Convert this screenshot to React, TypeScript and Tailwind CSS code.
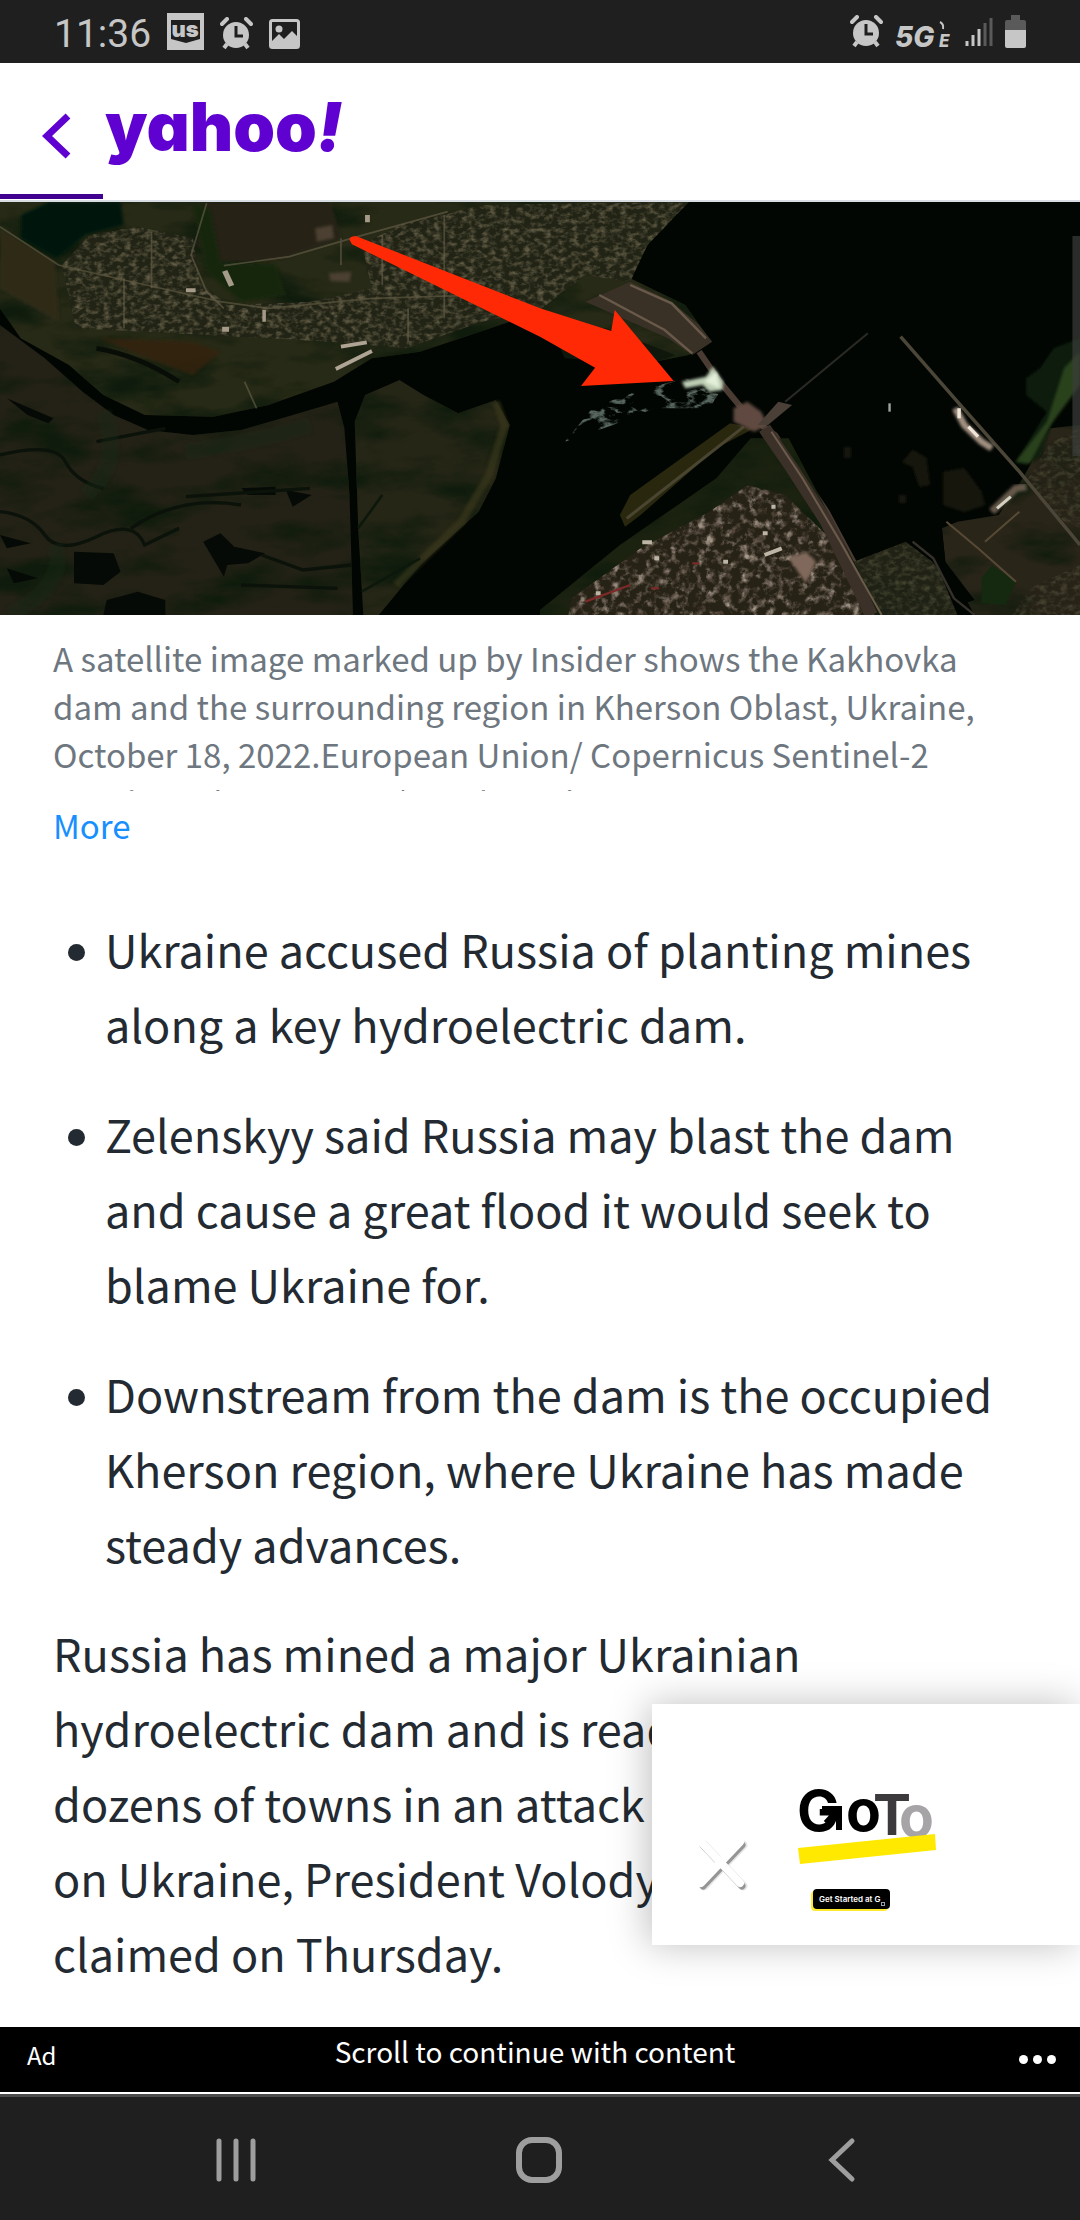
import React from 'react';

function AlarmIcon() {
  return (
    <svg width="33" height="33" viewBox="0 0 33 33" fill="none" aria-label="Alarm">
      <circle cx="16" cy="18" r="13" fill="#c6c6c6" />
      <path d="M2 7 L7 2 M31 7 L26 2" stroke="#c6c6c6" strokeWidth="4" strokeLinecap="round" />
      <path d="M7 27 L4 31 M25 27 L28 31" stroke="#c6c6c6" strokeWidth="4" />
      <path d="M16 9 V19 H23" stroke="#1f1f1f" strokeWidth="3" />
    </svg>
  );
}

function StatusBar() {
  return (
    <header className="flex h-[63px] shrink-0 items-center justify-between bg-[#1f1f1f] px-[54px]">
      <div className="flex items-center gap-4 pt-1">
        <span className="font-['Roboto'] text-[39px] leading-[48px] text-[#c6c6c6]">11:36</span>
        <svg width="37" height="37" viewBox="0 0 37 37" aria-label="US news" className="mb-1">
          <rect width="37" height="37" fill="#c6c6c6" />
          <path d="M4 7 H33 V26 L19 30 L4 26 Z" fill="#1f1f1f" />
          <text x="18" y="24" textAnchor="middle" fill="#c6c6c6" className="font-['Inter'] text-[22px] font-black">us</text>
        </svg>
        <AlarmIcon />
        <svg width="32" height="30" viewBox="0 0 32 30" fill="none" aria-label="Picture">
          <rect x="1.5" y="1.5" width="28" height="27" rx="2" stroke="#c6c6c6" strokeWidth="3" />
          <circle cx="10" cy="10" r="3.5" fill="#c6c6c6" />
          <path d="M3 22 L10 15 L15 20 L23 12 L29 18 V28 H3 Z" fill="#c6c6c6" />
        </svg>
      </div>
      <div className="flex items-center gap-3">
        <AlarmIcon />
        <svg width="58" height="38" viewBox="0 0 58 38" aria-label="5G E network">
          <text x="0" y="34" fill="#c6c6c6" className="font-['Inter'] text-[28px] font-extrabold italic">5G</text>
          <text x="44" y="34" fill="#c6c6c6" className="font-['Inter'] text-[17px] font-extrabold italic">E</text>
          <path d="M45 9 Q49 11 48 16" stroke="#c6c6c6" strokeWidth="2" fill="none" />
        </svg>
        <svg width="28" height="31" viewBox="0 0 28 31" strokeWidth="3" aria-label="Signal">
          <path d="M2 25 V30 M8 19 V30 M14 13 V30" stroke="#c6c6c6" />
          <path d="M20 7 V30 M26 2 V30" stroke="#5a5a5a" />
        </svg>
        <svg width="21" height="33" viewBox="0 0 21 33" aria-label="Battery">
          <path d="M6 0 H15 V5 H19 Q21 5 21 7 V15 H0 V7 Q0 5 2 5 H6 Z" fill="#5a5a5a" />
          <path d="M0 15 H21 V31 Q21 33 19 33 H2 Q0 33 0 31 Z" fill="#c6c6c6" />
        </svg>
      </div>
    </header>
  );
}

function SiteHeader() {
  return (
    <div className="flex shrink-0 flex-col border-b-2 border-[#d8dde4]">
      <div className="flex h-[131px] items-center pl-[42px]">
        <button aria-label="Back" className="mt-[14px]">
          <svg width="32" height="46" viewBox="0 0 32 46" fill="none">
            <path d="M26 3 L5 23 L26 43" stroke="#5f01d1" strokeWidth="7" />
          </svg>
        </button>
        <a href="#home" aria-label="yahoo!" className="ml-[31px]">
          <svg width="250" height="90" viewBox="0 0 250 90" fill="#5f01d1">
            <text x="0" y="67" className="font-['Inter'] text-[67px] font-black [font-feature-settings:'cv11']">
              yahoo<tspan className="italic">!</tspan>
            </text>
          </svg>
        </a>
      </div>
      <div className="h-[6px]">
        <div className="h-[5px] w-[103px] bg-[#400090]" />
      </div>
    </div>
  );
}

function SatelliteImage() {
  return (
    <svg
      viewBox="0 21 3136 1239"
      preserveAspectRatio="none"
      className="block h-[413px] w-full shrink-0"
      role="img"
      aria-label="Satellite image of the Kakhovka dam with a red arrow"
    >
      <defs>
        <filter id="town" x="0" y="0" width="1" height="1" colorInterpolationFilters="sRGB">
          <feTurbulence type="fractalNoise" baseFrequency="0.05 0.07" numOctaves="3" seed="4" />
          <feColorMatrix values="0 0 0 0 0.38  0 0 0 0 0.36  0 0 0 0 0.27  2.4 0 0 0 -1" />
          <feComposite in2="SourceAlpha" operator="in" result="n" />
          <feMerge><feMergeNode in="SourceGraphic" /><feMergeNode in="n" /></feMerge>
        </filter>
        <filter id="city" x="0" y="0" width="1" height="1" colorInterpolationFilters="sRGB">
          <feTurbulence type="fractalNoise" baseFrequency="0.04" numOctaves="4" seed="9" />
          <feColorMatrix values="0 0.6 0 0 0.16  0 0.6 0 0 0.11  0 0.6 0 0 0.06  3.4 0 0 0 -1.55" />
          <feComposite in2="SourceAlpha" operator="in" result="n" />
          <feMerge><feMergeNode in="SourceGraphic" /><feMergeNode in="n" /></feMerge>
        </filter>
        <filter id="marsh" x="0" y="0" width="1" height="1" colorInterpolationFilters="sRGB">
          <feTurbulence type="fractalNoise" baseFrequency="0.004 0.01" numOctaves="5" seed="2" />
          <feColorMatrix values="0 0 0 0 0.06  0 0 0 0 0.11  0 0 0 0 0.05  3 0 0 0 -1.3" />
          <feComposite in2="SourceAlpha" operator="in" result="n" />
          <feMerge><feMergeNode in="SourceGraphic" /><feMergeNode in="n" /></feMerge>
        </filter>
        <filter id="foam" x="0" y="0" width="1" height="1" colorInterpolationFilters="sRGB">
          <feTurbulence type="turbulence" baseFrequency="0.012 0.02" numOctaves="4" seed="7" />
          <feColorMatrix values="0 0 0 0 0.34  0 0 0 0 0.4  0 0 0 0 0.37  -6 0 0 0 1.6" />
          <feComposite in2="SourceAlpha" operator="in" />
        </filter>
        <filter id="soft"><feGaussianBlur stdDeviation="5" /></filter>
      </defs>

      <rect y="21" width="3136" height="1239" fill="#020603" />

      {/* north bank */}
      <path filter="url(#marsh)" d="M0 21 H2000 L1880 150 L1830 250 L1990 330 L2065 440 L2000 480 L1900 500 L1700 420 L1480 380 L1220 470 L1080 490 L970 560 L780 630 L620 665 L420 660 L300 600 L200 510 L60 430 L0 340 Z" fill="#272a16" />
      <path d="M60 60 L140 21 H350 L360 90 L250 120 L165 190 L60 130 Z" fill="#04160a" filter="url(#soft)" />
      <path d="M600 21 H960 L990 130 L820 190 L650 205 L570 150 Z" fill="#252314" filter="url(#soft)" />
      <path d="M560 30 L600 230 L700 320 L830 300 L800 210 L640 200 L610 40 Z" fill="#142711" filter="url(#soft)" />
      <path d="M0 100 L160 200 L170 380 L0 280 Z" fill="#2e2a17" filter="url(#soft)" />
      <g filter="url(#town)" fill="#212315">
        <path d="M180 210 L260 120 L400 95 L560 130 L580 260 L660 330 L900 320 L1080 280 L1050 150 L1160 90 L1400 30 L2000 21 L1880 150 L1830 260 L1700 240 L1560 350 L1400 380 L1180 460 L960 440 L600 420 L220 400 Z" />
      </g>
      <path d="M290 430 L560 440 L640 470 L560 540 L430 490 Z" fill="#35200f" opacity=".8" filter="url(#soft)" />
      <path d="M280 460 Q400 480 520 560" stroke="#080e07" strokeWidth="14" fill="none" />
      <path d="M0 95 L170 210 L360 255 L640 320 L780 340 L1080 310 L1400 300" stroke="#5d5740" strokeWidth="5" fill="none" opacity=".7" />
      <path d="M600 25 L555 180 L600 290 L650 340 M650 212 L840 185 L1020 130 L1300 50 M990 130 V210 M1185 340 V440 M360 250 V400 M440 110 V280 M1110 120 V270 M1290 60 V370 M710 560 L745 640" stroke="#6a634c" strokeWidth="5" fill="none" opacity=".6" />
      <path d="M915 100 L965 90 L970 130 L920 140 Z M955 235 L1020 230 L1015 260 L960 258 Z" fill="#4c3f30" filter="url(#soft)" />
      <path d="M645 230 L660 225 L680 270 L665 275 Z M645 395 h20 v15 h-20 Z M762 345 h10 v35 h-10 Z M1060 60 h14 v22 h-14 Z M540 280 h28 v12 h-28 Z" fill="#a59b88" />
      <path d="M975 522 L1080 468 M990 455 L1065 442" stroke="#b0a595" strokeWidth="11" />

      {/* southern marsh */}
      <path filter="url(#marsh)" d="M0 390 L130 490 L240 590 L330 660 L430 705 L560 720 L700 705 L850 660 L980 620 L1000 700 L1015 900 L1025 1260 H0 Z" fill="#242216" />
      <path filter="url(#marsh)" d="M1060 600 L1160 555 L1230 600 L1330 655 L1440 615 L1480 690 L1440 850 L1390 950 L1220 1110 L1100 1260 H1055 L1040 1000 L1030 680 Z" fill="#262616" />
      <path d="M1440 620 L1465 690 L1420 840 L1340 980 L1150 1170" stroke="#3c3a1c" strokeWidth="22" fill="none" opacity=".6" filter="url(#soft)" />
      <path d="M215 1070 L330 1075 L350 1130 L300 1170 L215 1165 Z M590 1040 L640 1015 L680 1055 L770 1075 L720 1105 L660 1110 L650 1145 Z M310 1215 L400 1190 L480 1215 V1260 H300 Z M700 880 L800 875 L800 900 L720 900 Z M830 885 L905 900 L850 935 Z M20 610 L155 670 L140 685 L80 660 Z M0 1020 L90 1045 L20 1060 Z M20 1120 L110 1150 L40 1165 Z" fill="#060a06" />
      <path d="M0 950 Q90 960 130 1020 T280 1025 T420 1050 L520 1000 M0 780 Q160 740 190 800 T300 880 M540 905 L900 880 M380 1000 Q520 900 700 930 M700 1170 L980 1180 M760 1080 L880 1125 L1020 1110 M280 740 L480 700" stroke="#0b120a" strokeWidth="10" fill="none" />
      <path d="M30 1260 Q200 1160 160 1050 M300 650 Q360 800 250 900 M540 770 Q750 740 900 690" stroke="#142a12" strokeWidth="45" fill="none" opacity=".4" filter="url(#soft)" />
      <path d="M1040 1000 L1110 900 M1050 1190 L1220 1090" stroke="#0d180c" strokeWidth="8" />

      {/* causeway and dam */}
      <path d="M1700 320 L1830 260 L1950 320 L2030 390 L2068 440 L2010 480 L1940 430 Z" fill="#393126" />
      <path d="M1740 300 L1930 405 L2010 475 M1830 270 L1950 325 L2050 430" stroke="#69594a" strokeWidth="7" fill="none" />
      <path d="M1600 400 L1760 400 L1960 480 L1880 510 L1640 490 Z" fill="#0f170c" />
      <path d="M2030 470 L2090 560 L2170 660 L2250 720 L2400 950 L2560 1260" stroke="#4a3c33" strokeWidth="18" fill="none" />
      <path d="M1640 740 L1720 640 L1840 590 L1990 550 L2090 590 L2060 640 L1900 640 L1780 690 Z" fill="#fff" filter="url(#foam)" />
      <path d="M1980 560 L2050 545 L2070 515 L2100 560 L2098 585 L2060 590 L2040 570 L1990 580 Z" fill="#bccdb4" filter="url(#soft)" />
      <path d="M2045 560 L2080 530 L2090 580 Z" fill="#e4efd9" filter="url(#soft)" />
      <path d="M1800 960 L1830 900 L2120 685 L2190 700 L2080 760 L1860 960 L1815 995 Z" fill="#29280f" />
      <path d="M1820 970 L2160 695" stroke="#4a4530" strokeWidth="9" />

      {/* south bank city */}
      <path filter="url(#marsh)" d="M1568 1245 L1800 1050 L2080 850 L2180 730 L2290 730 L2480 1100 L2630 1040 L2720 1110 L2780 1260 H1568 Z" fill="#1c2210" />
      <path filter="url(#city)" d="M1660 1210 L1860 1060 L2060 950 L2170 870 L2280 900 L2420 1040 L2540 1260 H1650 Z" fill="#272216" />
      <path filter="url(#town)" opacity=".6" d="M2480 1100 L2630 1040 L2720 1110 L2780 1260 H2560 Z" fill="#25231a" />
      <path d="M2220 700 L2300 820 L2400 980 L2530 1260" stroke="#3b3128" strokeWidth="38" fill="none" />
      <path d="M2240 710 L2330 850 L2440 1040 L2560 1260" stroke="#6b5b4b" strokeWidth="6" fill="none" />
      <path d="M2130 640 L2170 620 L2210 650 L2230 690 L2190 710 L2130 680 Z" fill="#5f4a3f" filter="url(#soft)" />
      <path d="M2200 690 L2260 620 L2300 630 L2230 690 Z" fill="#4a4037" />
      <path d="M2280 620 L2520 415" stroke="#292a24" strokeWidth="6" />
      <path d="M2290 1090 L2340 1070 L2370 1100 L2340 1165 Z" fill="#80695b" filter="url(#soft)" />
      <path d="M2220 1080 L2270 1060 M2215 1015 h14 M1865 1042 h28 M1900 1090 h14 M2240 935 h12 M2100 1100 h14 M1730 1195 h14" stroke="#bdb6a6" strokeWidth="12" />
      <path d="M2010 1105 h20 M1890 1180 h24 M1700 1220 L1830 1170" stroke="#7c2928" strokeWidth="7" />

      {/* eastern harbour */}
      <path d="M2620 800 L2650 765 L2690 790 L2700 870 L2670 875 L2650 815 Z M2740 830 L2800 820 L2850 890 L2860 930 L2800 950 L2740 930 Z M2450 755 h20 v35 h-20 Z M2610 900 h20 v25 h-20 Z" fill="#14170f" filter="url(#soft)" />
      <path filter="url(#marsh)" d="M3136 690 L3050 700 L2970 850 L2900 960 L2780 980 L2735 1000 L2745 1100 L2830 1260 H3136 Z" fill="#2a2519" />
      <g filter="url(#town)" opacity=".5" fill="#262217">
        <path d="M2980 860 L3050 740 L3136 700 V1000 L3090 980 Z M2990 1180 L3136 1110 V1260 H2940 Z" />
      </g>
      <path d="M3136 430 L3060 460 L3020 520 L2980 550 L2980 600 L3040 650 L2950 800 L2980 810 L3020 780 L3070 640 L3136 540 Z" fill="#0f1f0c" filter="url(#soft)" />
      <path d="M3136 470 L3090 520 L3040 680 L2950 800 L2990 805 L3050 690 L3136 570 Z" fill="#2b431c" filter="url(#soft)" />
      <path d="M2850 1150 L2880 1110 L2950 1160 L2920 1230 L2850 1225 Z" fill="#14290f" />
      <path d="M2615 425 L2780 620 L2960 830 L3136 1050" stroke="#4c4638" strokeWidth="10" fill="none" />
      <path d="M2774 640 L2800 690 L2850 740 L2880 760" stroke="#a08f80" strokeWidth="20" fill="none" filter="url(#soft)" />
      <path d="M2785 640 V670 M2812 695 L2840 725" stroke="#eee5d8" strokeWidth="10" />
      <path d="M2880 950 L2950 880 L2980 875" stroke="#655848" strokeWidth="22" fill="none" filter="url(#soft)" />
      <path d="M2895 940 L2935 905" stroke="#d5d0c4" strokeWidth="9" />
      <path d="M2748 980 L2840 1060 L2950 1160 M2860 1040 L2960 950" stroke="#564935" strokeWidth="6" fill="none" />
      <path d="M2700 1020 L2735 1000 L2745 1100 L2830 1215 L2800 1225 L2700 1090 Z" fill="#020603" />
      <path d="M2650 1040 L2710 1090 L2770 1210 L2830 1260" stroke="#35312a" strokeWidth="7" fill="none" />
      <path d="M2583 625 v25" stroke="#9ba59a" strokeWidth="7" />

      <path d="M1015 135 Q1015 122 1035 124 L1568 340 L1775 408 L1785 345 L1956 558 L1687 573 L1728 518 L1568 425 L1022 148 Z" fill="#ff2a05" />
      <rect x="3114" y="123" width="22" height="660" fill="#3a3d3a" opacity=".7" />
    </svg>
  );
}

const points = [
  'Ukraine accused Russia of planting mines along a key hydroelectric dam.',
  'Zelenskyy said Russia may blast the dam and cause a great flood it would seek to blame Ukraine for.',
  'Downstream from the dam is the occupied Kherson region, where Ukraine has made steady advances.',
];

function Article() {
  return (
    <main className="grow px-[53px] pt-[19px]">
      <figcaption className="h-[157px] overflow-hidden text-[33px] leading-[48px] text-[#6e7780]">
        A satellite image marked up by Insider shows the Kakhovka dam and the surrounding region in Kherson Oblast,
        Ukraine, October 18, 2022.European Union/ Copernicus Sentinel-2 Handout via REUTERS/Handout via REUTERS
      </figcaption>
      <button className="mt-[10px] block text-[33px] leading-[48px] text-[#188fff]">More</button>
      <ul className="mt-[62px] flex flex-col gap-[35px]">
        {points.map((p) => (
          <li key={p} className="flex gap-[20px] pl-[15px]">
            <span className="mt-[33px] size-[17px] shrink-0 rounded-full bg-[#232a31]" />
            <span className="text-[45px] leading-[75px]">{p}</span>
          </li>
        ))}
      </ul>
      <p className="mt-[34px] text-[45px] leading-[75px]">
        Russia has mined a major Ukrainian
        <br />
        hydroelectric dam and is ready to flood
        <br />
        dozens of towns in an attack to blame
        <br />
        on Ukraine, President Volodymyr
        <br />
        claimed on Thursday.
      </p>
    </main>
  );
}

function FloatingAd() {
  return (
    <aside className="absolute right-0 bottom-[275px] flex h-[241px] w-[428px] items-end bg-white pl-[42px] shadow-[-4px_0_36px_rgba(0,0,0,0.25)]">
      <button aria-label="Close ad" className="mb-[54px]">
        <svg width="56" height="56" viewBox="0 0 56 56" fill="none" strokeLinecap="round">
          <path d="M7 7 L46 48 M46 7 L7 48" stroke="#000" strokeOpacity=".1" strokeWidth="9" transform="translate(3 3)" />
          <path d="M7 7 L46 48 M46 7 L7 48" stroke="#000" strokeOpacity=".35" strokeWidth="7" transform="translate(2 3)" />
          <path d="M7 7 L46 48 M46 7 L7 48" stroke="#fff" strokeWidth="8" />
        </svg>
      </button>
      <div className="mb-[36px] ml-[48px] flex flex-col">
        <svg width="140" height="78" viewBox="0 0 140 78" className="font-['Inter'] text-[57px] font-bold" aria-label="GoTo">
          <text x="-1" y="44">G</text>
          <path d="M24 22 H41 V43 M40 23 L28 36" stroke="#000" strokeWidth="6" fill="none" />
          <text x="48" y="44">o</text>
          <text x="75" y="48" fill="#3d3a3d">T</text>
          <text x="101" y="50" fill="#a7a4a8">o</text>
          <path d="M0 61 L137 47 L138 63 L2 77 Z" fill="#ffe900" />
        </svg>
        <button className="mt-[24px] ml-[15px] flex h-[20px] w-[77px] items-center gap-px rounded bg-black pl-[6px] font-['Inter'] text-[8px] font-semibold whitespace-nowrap text-white shadow-[-2px_2px_0_#ffe92e]">
          Get Started at G
          <span className="mt-[10px] size-[4px] shrink-0 border border-gray-400" />
        </button>
      </div>
    </aside>
  );
}

function AdBar() {
  return (
    <div className="grid h-[70px] shrink-0 grid-cols-[1fr_auto_1fr] border-b-[3px] border-[#4a4a4a] bg-black text-white shadow-[inset_0_-2px_0_#fff]">
      <span className="pt-1 pl-[27px] text-[24px] leading-[48px]">Ad</span>
      <span className="pr-[10px] text-[28px] leading-[48px]">Scroll to continue with content</span>
      <button aria-label="More options" className="mt-[28px] mr-[24px] flex h-[9px] gap-[5px] justify-self-end">
        <span className="size-[9px] rounded-full bg-white" />
        <span className="size-[9px] rounded-full bg-white" />
        <span className="size-[9px] rounded-full bg-white" />
      </button>
    </div>
  );
}

function NavBar() {
  return (
    <nav className="grid h-[123px] shrink-0 grid-cols-3 items-center justify-items-center bg-[#1f1f1f] px-[86px] pt-[3px]">
      <button aria-label="Recent apps">
        <svg width="44" height="48" viewBox="0 0 44 48" stroke="#9e9e9e" strokeWidth="5" strokeLinecap="round">
          <path d="M4 5 V43 M21 5 V43 M38 5 V43" />
        </svg>
      </button>
      <button aria-label="Home">
        <svg width="50" height="48" viewBox="0 0 50 48" fill="none">
          <rect x="4" y="4" width="40" height="40" rx="13" stroke="#9e9e9e" strokeWidth="6" />
        </svg>
      </button>
      <button aria-label="Back">
        <svg width="30" height="48" viewBox="0 0 30 48" fill="none" stroke="#9e9e9e" strokeWidth="5" strokeLinecap="round">
          <path d="M24 5 L4 24 L24 43" />
        </svg>
      </button>
    </nav>
  );
}

export default function App() {
  return (
    <div className="relative flex min-h-screen flex-col overflow-hidden bg-white font-['Noto_Sans_CJK_SC',sans-serif] text-[#232a31]">
      <StatusBar />
      <SiteHeader />
      <SatelliteImage />
      <Article />
      <AdBar />
      <NavBar />
      <FloatingAd />
    </div>
  );
}
